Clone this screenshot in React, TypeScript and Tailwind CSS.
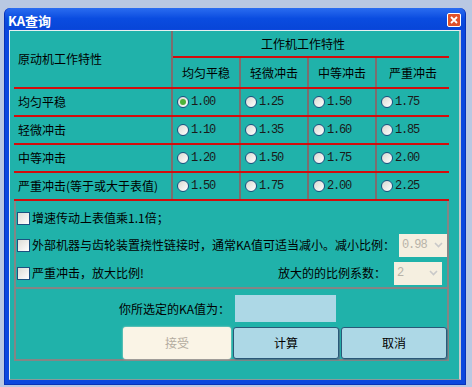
import React from "react";

const cjk = { fontFamily: '"Noto Sans CJK SC", "Noto Sans", sans-serif' };
const mono = { fontFamily: '"Liberation Mono", "Noto Sans CJK SC", monospace' };

const cols = ["均匀平稳", "轻微冲击", "中等冲击", "严重冲击"];
const colW = ["w-[68px]", "w-[68px]", "w-[68px]", "w-[72px]"];

const rows: { label: string; values: string[] }[] = [
  { label: "均匀平稳", values: ["1.00", "1.25", "1.50", "1.75"] },
  { label: "轻微冲击", values: ["1.10", "1.35", "1.60", "1.85"] },
  { label: "中等冲击", values: ["1.20", "1.50", "1.75", "2.00"] },
  { label: "严重冲击(等于或大于表值)", values: ["1.50", "1.75", "2.00", "2.25"] },
];

function Radio({ checked }: { checked?: boolean }) {
  return (
    <span className="w-[12px] h-[12px] rounded-full border border-[#1c5180] bg-gradient-to-br from-[#d8d8d0] to-white flex items-center justify-center shrink-0">
      {checked && <span className="w-[6px] h-[6px] rounded-full bg-[#4fb33a]" />}
    </span>
  );
}

function Check() {
  return <span className="w-[13px] h-[13px] border border-[#1c5180] bg-gradient-to-br from-[#dcdcd6] to-white shrink-0" />;
}

function Combo({ value }: { value: string }) {
  return (
    <div className="w-[48px] h-[23px] bg-[#f5efe0] flex items-center justify-between pl-[3px] pr-[4px] shrink-0">
      <span className="text-[12px] tracking-[-1px] text-[#b8b3a8]" style={mono}>{value}</span>
      <svg width="9" height="6" viewBox="0 0 9 6">
        <path d="M1 1l3.5 3.5L8 1" stroke="#c9c9c9" strokeWidth="1.6" fill="none" />
      </svg>
    </div>
  );
}

export default function App() {
  return (
    <div className="w-[472px] h-[387px] bg-[#b9c8e2] pt-[8px] pl-[4px]" style={cjk}>
      <div className="w-[462px] h-[377px] bg-[#0b47de] rounded-t-[6px] flex flex-col border-l border-r border-b border-[#0832b8]">
        {/* title bar */}
        <div className="h-[21px] flex items-center justify-between pl-[3px] pr-[4px] bg-gradient-to-b from-[#2a6cf0] via-[#0a4ce0] to-[#0846d8] rounded-t-[6px]">
          <span className="text-white font-bold text-[13px] leading-none mt-[3px]" style={cjk}>KA查询</span>
          <span className="w-[14px] h-[14px] mt-[3px] rounded-[2px] border border-white bg-[#e0512a] flex items-center justify-center">
            <svg width="8" height="8" viewBox="0 0 8 8">
              <path d="M1 1l6 6M7 1L1 7" stroke="white" strokeWidth="1.8" />
            </svg>
          </span>
        </div>

        {/* body */}
        <div className="mx-[4px] mt-[1px] h-[350px] bg-[#20b2aa] border-t border-l border-[#e8f0f0] border-r-2 border-r-[#c8cccc] border-b border-b-[#8a9a9a] pl-[4px] text-[12px] text-black">
          <div className="w-[435px]">
            {/* header */}
            <div className="flex h-[58px] border-b-2 border-[#d40c0c]">
              <div className="w-[159px] flex items-center pl-[4px] border-r-2 border-[#7c6e6e]">原动机工作特性</div>
              <div className="flex-1 flex flex-col">
                <div className="h-[27px] flex items-center justify-center pr-[16px] border-b-2 border-[#d40c0c]">工作机工作特性</div>
                <div className="flex flex-1">
                  {cols.map((c, i) => (
                    <div
                      key={c}
                      className={`${colW[i]} flex items-center justify-center ${i < 3 ? "border-r-2 border-[#7c6e6e]" : ""}`}
                    >
                      {c}
                    </div>
                  ))}
                </div>
              </div>
            </div>

            {/* rows */}
            {rows.map((r, ri) => (
              <div key={r.label} className="flex h-[28px] border-b-2 border-[#d40c0c]">
                <div className="w-[159px] flex items-center pl-[4px] border-r-2 border-[#7c6e6e] whitespace-nowrap">{r.label}</div>
                {r.values.map((v, i) => (
                  <div
                    key={i}
                    className={`${colW[i]} flex items-center gap-[2px] pl-[4px] ${i < 3 ? "border-r-2 border-[#7c6e6e]" : ""}`}
                  >
                    <Radio checked={ri === 0 && i === 0} />
                    <span className="text-[12px] tracking-[-1.2px] text-[#1a1a1a]" style={mono}>{v}</span>
                  </div>
                ))}
              </div>
            ))}

            {/* options */}
            <div className="border-x-2 border-b-2 border-[#858585] pt-[4px] pl-[1px] pr-[5px]">
              <div className="h-[26px] flex items-center gap-[2px]">
                <Check />
                <span>增速传动上表值乘1.1倍；</span>
              </div>
              <div className="h-[28px] flex items-center gap-[2px]">
                <Check />
                <span className="whitespace-nowrap">外部机器与齿轮装置挠性链接时，通常KA值可适当减小。减小比例：</span>
                <span className="flex-1" />
                <Combo value="0.98" />
              </div>
              <div className="h-[28px] flex items-center gap-[2px]">
                <Check />
                <span>严重冲击，放大比例!</span>
                <span className="flex-1" />
                <span className="mr-[6px]">放大的的比例系数：</span>
                <Combo value="2" />
              </div>
            </div>

            {/* result */}
            <div className="border-x-2 border-b-2 border-[#858585] h-[72px] pt-[6px]">
              <div className="flex items-center">
                <div className="w-[214px] text-right">你所选定的KA值为：</div>
                <div className="ml-[5px] w-[101px] h-[27px] bg-[#add8e6]" />
              </div>
              <div className="flex justify-end gap-[2px] mt-[5px]">
                <button className="w-[108px] h-[32px] bg-[#faf4e6] rounded-[3px] text-[#b4aca0] text-[12px] shadow-[0_0_2px_#e8e0d0]">接受</button>
                <button className="w-[106px] h-[32px] bg-[#add8e6] rounded-[3px] border border-[#2a5878] text-[12px] shadow-[1px_1px_1px_#4a7a8a]">计算</button>
                <button className="w-[106px] h-[32px] bg-[#add8e6] rounded-[3px] border border-[#2a5878] text-[12px] shadow-[1px_1px_1px_#4a7a8a]">取消</button>
              </div>
            </div>
          </div>
        </div>
      </div>
    </div>
  );
}
